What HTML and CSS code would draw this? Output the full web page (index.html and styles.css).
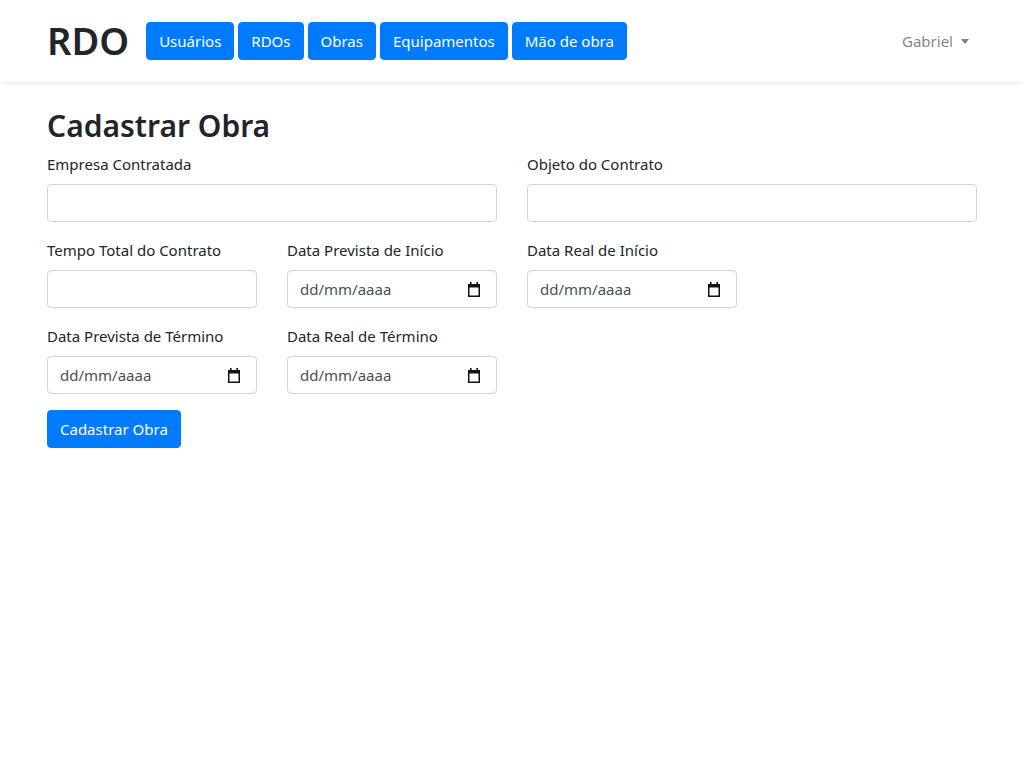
FILE: index.html
```html
<!DOCTYPE html>
<html lang="pt-BR">
<head>
<meta charset="utf-8">
<title>RDO - Cadastrar Obra</title>
<link rel="stylesheet" href="styles.css">
</head>
<body>
<nav class="navbar">
  <div class="container nav-inner">
    <a class="brand" href="#">RDO</a>
    <div class="nav-buttons">
      <a class="btn" href="#">Usuários</a>
      <a class="btn" href="#">RDOs</a>
      <a class="btn" href="#">Obras</a>
      <a class="btn" href="#">Equipamentos</a>
      <a class="btn" href="#">Mão de obra</a>
    </div>
    <a class="user" href="#">Gabriel <span class="caret"></span></a>
  </div>
</nav>
<main class="container content">
  <h2 class="title">Cadastrar Obra</h2>
  <form>
    <div class="row">
      <div class="form-group col-6">
        <label>Empresa Contratada</label>
        <input class="form-control" type="text">
      </div>
      <div class="form-group col-6">
        <label>Objeto do Contrato</label>
        <input class="form-control" type="text">
      </div>
    </div>
    <div class="row">
      <div class="form-group col-3">
        <label>Tempo Total do Contrato</label>
        <input class="form-control" type="text">
      </div>
      <div class="form-group col-3">
        <label>Data Prevista de Início</label>
        <div class="form-control date"><span>dd/mm/aaaa</span><svg class="cal" viewBox="0 0 14 15" width="14" height="15"><path d="M3 0h1.6v2H3zM9.4 0H11v2H9.4z" fill="#111"/><path d="M1 2h12v13H1z M2.5 5.5v8h9v-8z" fill="#111" fill-rule="evenodd"/></svg></div>
      </div>
      <div class="form-group col-3">
        <label>Data Real de Início</label>
        <div class="form-control date"><span>dd/mm/aaaa</span><svg class="cal" viewBox="0 0 14 15" width="14" height="15"><path d="M3 0h1.6v2H3zM9.4 0H11v2H9.4z" fill="#111"/><path d="M1 2h12v13H1z M2.5 5.5v8h9v-8z" fill="#111" fill-rule="evenodd"/></svg></div>
      </div>
    </div>
    <div class="row">
      <div class="form-group col-3">
        <label>Data Prevista de Término</label>
        <div class="form-control date"><span>dd/mm/aaaa</span><svg class="cal" viewBox="0 0 14 15" width="14" height="15"><path d="M3 0h1.6v2H3zM9.4 0H11v2H9.4z" fill="#111"/><path d="M1 2h12v13H1z M2.5 5.5v8h9v-8z" fill="#111" fill-rule="evenodd"/></svg></div>
      </div>
      <div class="form-group col-3">
        <label>Data Real de Término</label>
        <div class="form-control date"><span>dd/mm/aaaa</span><svg class="cal" viewBox="0 0 14 15" width="14" height="15"><path d="M3 0h1.6v2H3zM9.4 0H11v2H9.4z" fill="#111"/><path d="M1 2h12v13H1z M2.5 5.5v8h9v-8z" fill="#111" fill-rule="evenodd"/></svg></div>
      </div>
    </div>
    <button class="btn submit" type="button">Cadastrar Obra</button>
  </form>
</main>
</body>
</html>
```
FILE: styles.css
```css
* { box-sizing: border-box; }
html, body {
  margin: 0;
  background: #fff;
  font-family: "Noto Sans", "Open Sans", sans-serif;
  font-size: 15px;
  line-height: 24px;
  color: #212529;
}
a { text-decoration: none; }
.container {
  width: 960px;
  margin: 0 auto;
  padding: 0 15px;
}
.navbar {
  height: 82px;
  background: #fff;
  box-shadow: 0 2px 4px rgba(0, 0, 0, 0.075);
}
.nav-inner {
  height: 82px;
  display: flex;
  align-items: center;
}
.brand {
  font-size: 38px;
  font-weight: 600;
  color: #212529;
  line-height: 1;
  margin-right: 17px;
  margin-top: -2px;
}
.nav-buttons {
  display: flex;
  gap: 4px;
}
.btn {
  display: inline-block;
  background: #007bff;
  color: #fff;
  border: 1px solid #007bff;
  border-radius: 4px;
  padding: 6px 12px;
  font-family: inherit;
  font-size: 15px;
  line-height: 24px;
  height: 38px;
}
.user {
  margin-left: auto;
  color: rgba(0, 0, 0, 0.5);
  padding: 8px;
  display: flex;
  align-items: center;
}
.caret {
  display: inline-block;
  margin-left: 8px;
  border-top: 5px solid rgba(0,0,0,0.5);
  border-left: 4px solid transparent;
  border-right: 4px solid transparent;
  margin-top: 1px;
}
.content { padding-top: 26px; }
.title {
  font-size: 30px;
  font-weight: 600;
  line-height: 36px;
  margin: 0 0 8px;
}
.row {
  display: flex;
  gap: 30px;
}
.col-6 { width: 450px; }
.col-3 { width: 210px; }
.form-group { margin-bottom: 16px; }
label {
  display: block;
  margin-bottom: 8px;
}
.form-control {
  display: block;
  width: 100%;
  height: 38px;
  padding: 6px 12px;
  font-family: inherit;
  font-size: 15px;
  line-height: 24px;
  color: #495057;
  background: #fff;
  border: 1px solid #ced4da;
  border-radius: 4px;
}
.date {
  display: flex;
  align-items: center;
  justify-content: space-between;
  padding-right: 15px;
}
.cal { flex: none; }
```
